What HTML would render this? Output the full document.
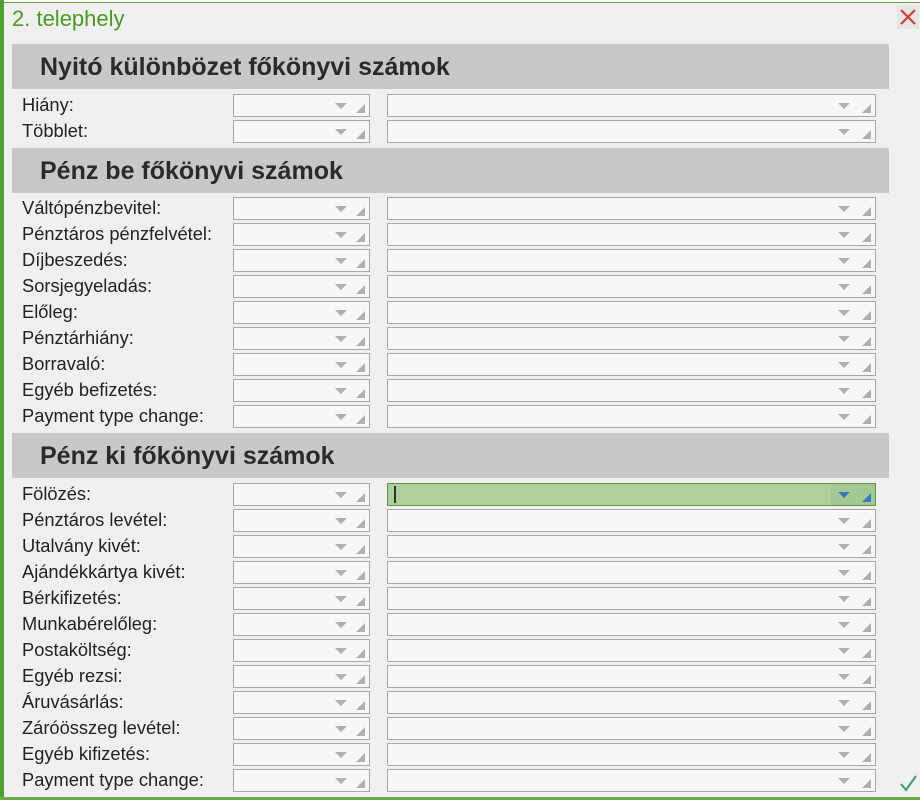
<!DOCTYPE html>
<html><head><meta charset="utf-8"><style>
*{margin:0;padding:0;box-sizing:border-box}
body{width:920px;height:800px;background:#f0f0f0;position:relative;overflow:hidden;font-family:"Liberation Sans",Arial,sans-serif}
.lb{position:absolute;left:0;top:0;width:4px;height:800px;background:#4fa02e}
.tb{position:absolute;left:4px;top:2px;width:916px;height:1px;background:#6aab4a}
.bb{position:absolute;left:0;top:797px;width:920px;height:3px;background:#6aab4a}
.topstrip{position:absolute;left:0;top:0;width:920px;height:2px;background:#fff}
.title{position:absolute;left:12px;top:6px;font-size:22px;color:#4a9a22}
.x{position:absolute;left:897px;top:5px;width:22px;height:24px;background:#e6e6e6}
.h{position:absolute;left:12px;width:877px;height:45px;background:#c8c8c8;font-weight:bold;font-size:25px;color:#2a2a2a;padding-left:28px;line-height:46px;white-space:nowrap}
.l{position:absolute;left:22px;font-size:18.3px;color:#222;line-height:22px;white-space:nowrap}
.b{position:absolute;height:23px;background:#f8f8f8;border:1px solid #a8a8a8}
.s{left:233px;width:137px}
.w{left:387px;width:489px}
.b .a{position:absolute;top:8px;width:0;height:0;border-left:6px solid transparent;border-right:6px solid transparent;border-top:6px solid #b0b0b0}
.b .c{position:absolute;top:9px;right:4px;width:0;height:0;border-left:9px solid transparent;border-bottom:9px solid #b0b0b0}
.s .a{right:22px}.w .a{right:25px}
.g{background:#acd09c;border-color:#5e9a44}
.g .a{border-top-color:#3a78c0}.g .c{border-bottom-color:#3a78c0}
.g .pad{position:absolute;right:0;top:0;width:44px;height:21px;background:#a3c893}
.g .cur{position:absolute;left:6px;top:2px;width:2px;height:17px;background:#333}
</style></head><body>
<div class="topstrip"></div>
<div class="lb"></div><div class="tb"></div><div class="bb"></div>
<div class="title">2. telephely</div>
<div class="x"><svg width="22" height="24" viewBox="0 0 22 24"><path d="M4 5L18 19M18 5L4 19" stroke="#d0402c" stroke-width="2.2"/></svg></div>
<svg style="position:absolute;left:898px;top:773px" width="20" height="20" viewBox="0 0 20 20"><path d="M3 11L8 17L18 3" stroke="#3aa070" stroke-width="2" fill="none"/></svg>
<div id="c"></div>
<script>
var secs=[["Nyitó különbözet főkönyvi számok",44,94,["Hiány:","Többlet:"]],
["Pénz be főkönyvi számok",148,197,["Váltópénzbevitel:","Pénztáros pénzfelvétel:","Díjbeszedés:","Sorsjegyeladás:","Előleg:","Pénztárhiány:","Borravaló:","Egyéb befizetés:","Payment type change:"]],
["Pénz ki főkönyvi számok",433,483,["Fölözés:","Pénztáros levétel:","Utalvány kivét:","Ajándékkártya kivét:","Bérkifizetés:","Munkabérelőleg:","Postaköltség:","Egyéb rezsi:","Áruvásárlás:","Záróösszeg levétel:","Egyéb kifizetés:","Payment type change:"]]];
var h="";
secs.forEach(function(s,si){
h+='<div class="h" style="top:'+s[1]+'px">'+s[0]+'</div>';
s[3].forEach(function(t,i){var y=s[2]+i*26;
h+='<div class="l" style="top:'+(y)+'px">'+t+'</div>';
h+='<div class="b s" style="top:'+y+'px"><div class="a"></div><div class="c"></div></div>';
var g=(si==2&&i==0);
h+='<div class="b w'+(g?' g':'')+'" style="top:'+y+'px">'+(g?'<div class="pad"></div><div class="cur"></div>':'')+'<div class="a"></div><div class="c"></div></div>';
});});
document.getElementById("c").innerHTML=h;
</script>
</body></html>
